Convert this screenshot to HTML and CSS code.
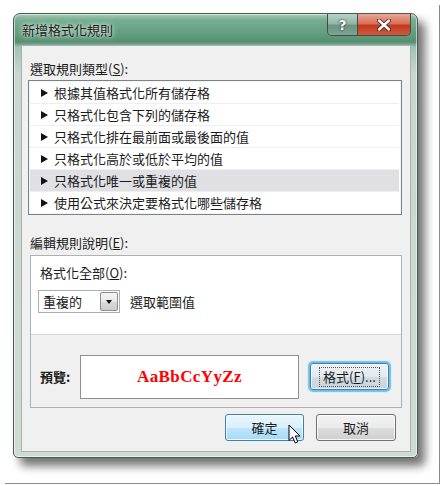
FILE: index.html
```html
<!DOCTYPE html>
<html lang="zh-Hant">
<head>
<meta charset="utf-8">
<title>新增格式化規則</title>
<link rel="stylesheet" href="styles.css">
</head>
<body>
<div class="page">
  <div class="window">
    <div class="titlebar">
      <div class="title">新增格式化規則</div>
      <div class="caption-buttons">
        <div class="cap-btn help">?</div>
        <div class="cap-btn close">
          <svg width="14" height="12" viewBox="0 0 14 12"><path d="M2 1.5 L12 10.5 M12 1.5 L2 10.5" stroke="#3a2a26" stroke-width="4.2" stroke-linecap="round"/><path d="M2 1.5 L12 10.5 M12 1.5 L2 10.5" stroke="#ffffff" stroke-width="2.4" stroke-linecap="round"/></svg>
        </div>
      </div>
    </div>
    <div class="client">
      <div class="label first">選取規則類型(<u>S</u>):</div>
      <div class="listbox">
        <div class="row"><span class="tri"></span>根據其值格式化所有儲存格</div>
        <div class="row"><span class="tri"></span>只格式化包含下列的儲存格</div>
        <div class="row"><span class="tri"></span>只格式化排在最前面或最後面的值</div>
        <div class="row"><span class="tri"></span>只格式化高於或低於平均的值</div>
        <div class="row selected"><span class="tri"></span>只格式化唯一或重複的值</div>
        <div class="row last"><span class="tri"></span>使用公式來決定要格式化哪些儲存格</div>
      </div>
      <div class="label second">編輯規則說明(<u>E</u>):</div>
      <div class="panel">
        <div class="panel-top">
          <div class="sublabel">格式化全部(<u>O</u>):</div>
          <div class="combo-row">
            <div class="combo">
              <span class="combo-text">重複的</span>
              <span class="combo-btn"><span class="down"></span></span>
            </div>
            <span class="combo-after">選取範圍值</span>
          </div>
        </div>
        <div class="panel-bottom">
          <span class="preview-label">預覽:</span>
          <div class="preview">AaBbCcYyZz</div>
          <div class="btn focus"><span class="focus-rect">格式(<u>F</u>)...</span></div>
        </div>
      </div>
      <div class="actions">
        <div class="btn hover">確定
          <svg class="cursor" width="14" height="21" viewBox="0 0 14 21"><path d="M1 1 L1 16.5 L4.6 13 L7.2 19 L9.8 17.9 L7.3 12 L12 12 Z" fill="#ffffff" stroke="#000000" stroke-width="1" stroke-linejoin="round"/></svg>
        </div>
        <div class="btn">取消</div>
      </div>
    </div>
  </div>
</div>
</body>
</html>
```

FILE: styles.css
```css
html, body {
  margin: 0;
  padding: 0;
  background: #ffffff;
}

body {
  font-family: "Noto Sans CJK TC", "Noto Sans", sans-serif;
  font-size: 13px;
  color: #1b1b1b;
}

.page {
  position: relative;
  width: 444px;
  height: 486px;
  padding: 13px 0 0 13px;
  box-sizing: border-box;
}

.page::before {
  content: "";
  position: absolute;
  left: 439px;
  top: 5px;
  width: 1px;
  height: 479px;
  background: #8a8a8a;
}

.page::after {
  content: "";
  position: absolute;
  left: 5px;
  top: 483px;
  width: 435px;
  height: 1px;
  background: #8a8a8a;
}

.window {
  width: 405px;
  height: 445px;
  box-sizing: border-box;
  border: 1px solid #4b5751;
  border-radius: 7px 7px 5px 5px;
  padding: 0 6px 5px 7px;
  background: linear-gradient(to bottom, #a6cdb9 0px, #76ad91 6px, #64a082 18px, #558f71 28px, #a3c2b2 33px, #c8d6cf 60px, #d0dad5 100%);
  box-shadow: 7px 8px 10px rgba(0, 0, 0, 0.55), inset 0 0 0 1px rgba(255, 255, 255, 0.55);
  display: flex;
  flex-direction: column;
}

.titlebar {
  height: 31px;
  display: flex;
  align-items: flex-start;
}

.title {
  flex: 1;
  padding: 8px 0 0 1px;
  line-height: 16px;
  color: #1a1a1a;
  text-shadow: 0 0 6px rgba(255, 255, 255, 0.9), 0 0 3px rgba(255, 255, 255, 0.7);
}

.caption-buttons {
  display: flex;
  height: 21px;
  border: 1px solid #3f4f47;
  border-top: none;
  border-radius: 0 0 5px 5px;
  overflow: hidden;
}

.cap-btn {
  height: 21px;
  display: flex;
  align-items: center;
  justify-content: center;
  color: #ffffff;
  font-family: "DejaVu Sans", sans-serif;
  font-weight: bold;
  font-size: 14px;
}

.help {
  width: 29px;
  border-right: 1px solid #3f4f47;
  background: linear-gradient(to bottom, #b9d2c6 0%, #93b6a6 45%, #6c9482 55%, #7ea393 100%);
  text-shadow: 0 0 2px #1f2f28, 0 0 1px #1f2f28;
}

.close {
  width: 52px;
  background: linear-gradient(to bottom, #e9a898 0%, #d7725a 45%, #c23a1d 55%, #d2583a 100%);
}

.client {
  flex: 1;
  background: #f0f0f0;
  border: 1px solid #a9b3ae;
  display: flex;
  flex-direction: column;
  align-items: flex-start;
}

.label {
  line-height: 16px;
  padding-left: 8px;
}

.label.first {
  margin-top: 15px;
}

.label.second {
  margin-top: 20px;
}

.listbox {
  margin: 3px 0 0 6px;
  width: 374px;
  height: 135px;
  box-sizing: border-box;
  border: 1px solid #7d8286;
  background: #ffffff;
  padding: 1px 2px 0 1px;
  box-shadow: inset 0 0 0 1px #f4f4f4;
}

.row {
  height: 22px;
  box-sizing: border-box;
  border-bottom: 1px solid #efefef;
  display: flex;
  align-items: center;
  padding-left: 11px;
  line-height: 16px;
}

.row.last {
  border-bottom: none;
}

.row.selected {
  background: #dfdfe4;
}

.tri {
  width: 0;
  height: 0;
  border-left: 7px solid #111111;
  border-top: 4.5px solid transparent;
  border-bottom: 4.5px solid transparent;
  margin-right: 6px;
}

.panel {
  margin: 4px 0 0 8px;
  width: 372px;
  height: 153px;
  box-sizing: border-box;
  border: 1px solid #adb1b5;
  display: flex;
  flex-direction: column;
}

.panel-top {
  height: 79px;
  background: #ffffff;
  border-bottom: 1px solid #d4d6d8;
  padding: 9px 0 0 7px;
  box-sizing: border-box;
}

.sublabel {
  line-height: 16px;
  padding-left: 2px;
}

.combo-row {
  margin-top: 9px;
  display: flex;
  align-items: center;
}

.combo {
  width: 82px;
  height: 23px;
  box-sizing: border-box;
  border: 1px solid #acaeb2;
  background: #ffffff;
  display: flex;
  align-items: center;
  justify-content: space-between;
  padding: 0 1px 0 4px;
}

.combo-text {
  line-height: 16px;
}

.combo-btn {
  width: 18px;
  height: 19px;
  box-sizing: border-box;
  border: 1px solid #8c8c8c;
  border-radius: 2px;
  background: linear-gradient(to bottom, #f4f4f4 0%, #e8e8e8 50%, #d9d9d9 51%, #cdcdcd 100%);
  display: flex;
  align-items: center;
  justify-content: center;
}

.down {
  width: 0;
  height: 0;
  border-top: 4px solid #111111;
  border-left: 3.5px solid transparent;
  border-right: 3.5px solid transparent;
}

.combo-after {
  margin-left: 10px;
  line-height: 16px;
}

.panel-bottom {
  flex: 1;
  background: #f0f0f0;
  display: flex;
  align-items: flex-start;
  padding: 20px 0 0 9px;
}

.preview-label {
  line-height: 16px;
  margin-top: 14px;
  width: 40px;
  font-weight: bold;
}

.preview {
  width: 219px;
  height: 44px;
  box-sizing: border-box;
  border: 1px solid #8f8f8f;
  background: #ffffff;
  color: #ff0000;
  font-family: "Liberation Serif", "Times New Roman", serif;
  font-weight: bold;
  font-size: 17px;
  letter-spacing: 0.4px;
  display: flex;
  align-items: center;
  justify-content: center;
}

.btn {
  position: relative;
  width: 79px;
  height: 27px;
  box-sizing: border-box;
  border: 1px solid #707070;
  border-radius: 3px;
  background: linear-gradient(to bottom, #f2f2f2 0%, #ebebeb 50%, #dddddd 51%, #cfcfcf 100%);
  box-shadow: inset 0 0 0 1px rgba(255, 255, 255, 0.8);
  display: flex;
  align-items: center;
  justify-content: center;
  line-height: 16px;
}

.btn.focus {
  margin: 8px 0 0 11px;
  border-color: #3c7fb1;
  background: linear-gradient(to bottom, #eef2f5 0%, #e3e9ee 50%, #d4dde4 51%, #c9d3db 100%);
  box-shadow: 0 0 1px 2px #6cc1ea, inset 0 0 0 1px rgba(255, 255, 255, 0.7);
}

.focus-rect {
  padding: 1px 3px;
  outline: 1px dotted #555555;
  outline-offset: 0;
}

.actions {
  margin-top: 6px;
  align-self: flex-end;
  margin-right: 14px;
  display: flex;
  gap: 12px;
}

.actions .btn + .btn {
  width: 80px;
}

.btn.hover {
  border-color: #3c7fb1;
  background: linear-gradient(to bottom, #eaf6fd 0%, #d9f0fc 50%, #bee6fd 51%, #a7d9f5 100%);
}

.cursor {
  position: absolute;
  left: 62px;
  top: 9px;
}
```
